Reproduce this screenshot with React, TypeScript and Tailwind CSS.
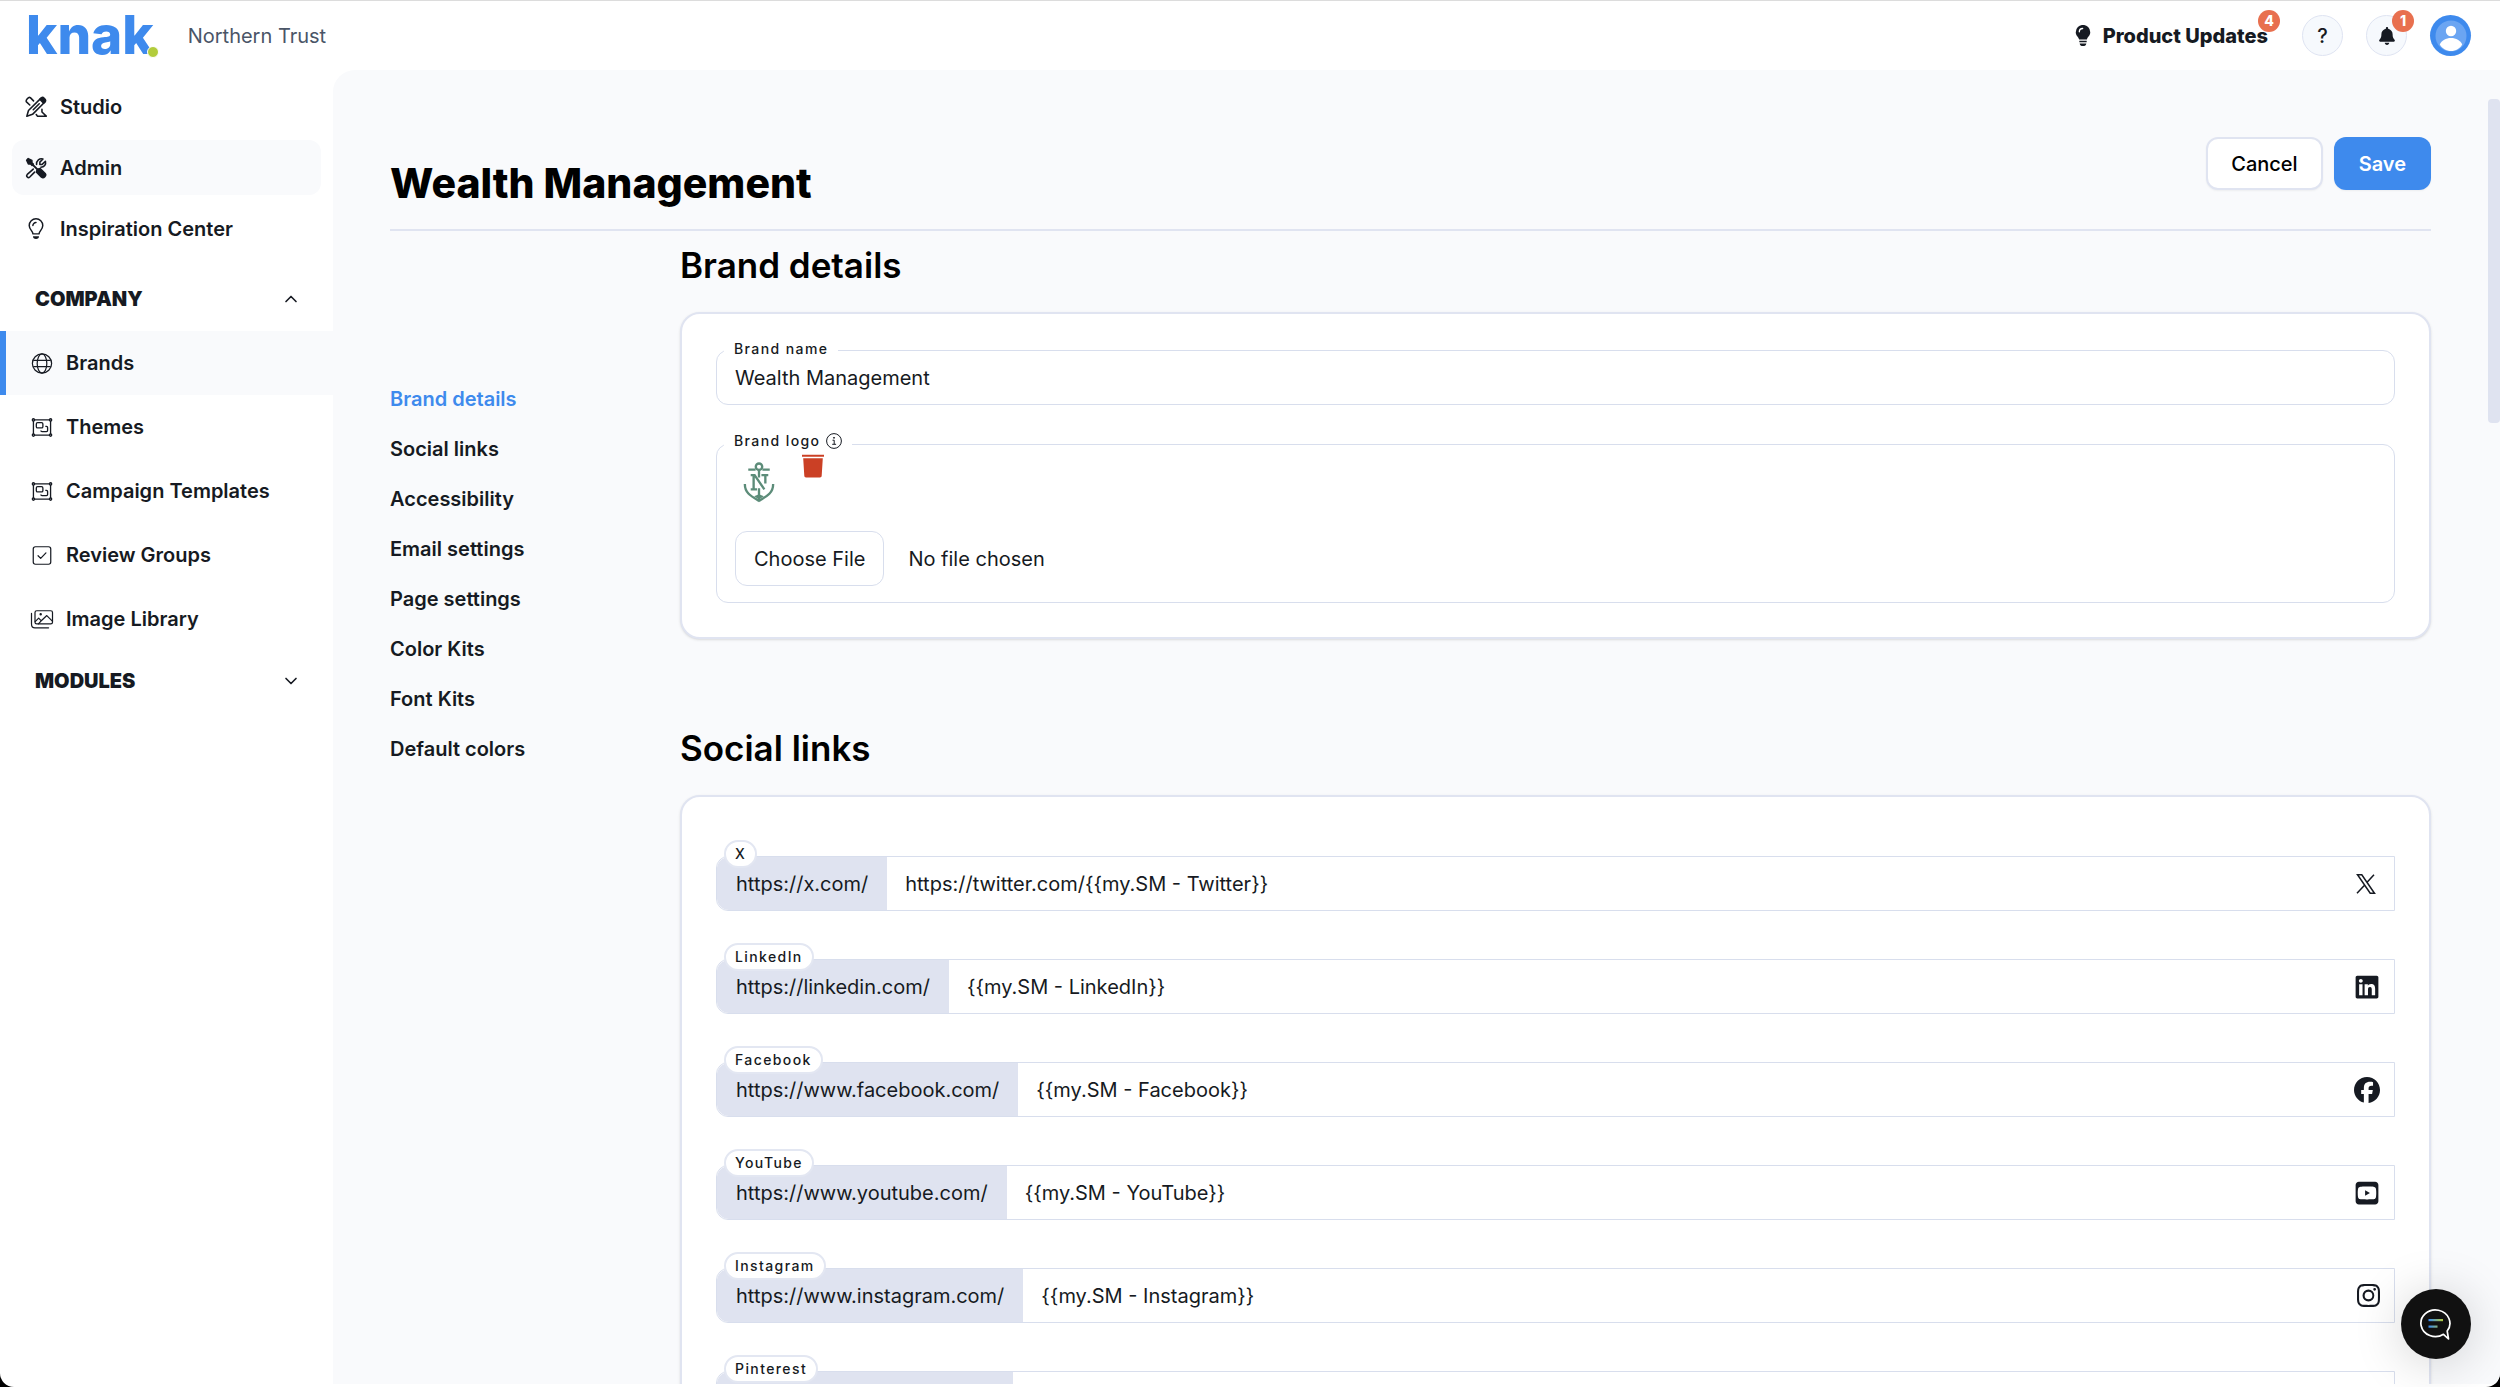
import type { ComponentType, ReactNode } from "react";
import { ChevronDown, ChevronUp } from "lucide-react";
import { BsInstagram } from "react-icons/bs";
import { FaBell, FaFacebook, FaLinkedin, FaSquareYoutube } from "react-icons/fa6";

interface IconProps {
  className?: string;
}

const StudioIcon = ({ className }: IconProps) => (
  <svg viewBox="0 0 24 24" className={className} fill="none" stroke="currentColor" strokeWidth="1.7" strokeLinejoin="round" strokeLinecap="round" aria-hidden="true">
    <path d="M2 22 3.800 15.800 17.200 2.600l4.200 4.200L8.200 20z" />
    <path d="M9 15 15.500 8.500" />
    <path d="M16.200 3.600 18 1.900c1.600-1.400 5.600 2.200 4.100 4.200l-1.800 1.800z" fill="currentColor" />
    <path d="M5.200 9.800 1.600 6.400C.3 4.900 3.900.6 5.800 1.800l3.500 3.500" />
    <path d="M18.500 14.500v3l4.700 4.500H13.500l-1.200-1.800" />
  </svg>
);

const AdminIcon = ({ className }: IconProps) => (
  <svg viewBox="0 0 24 24" className={className} fill="none" stroke="currentColor" strokeWidth="1.7" strokeLinejoin="round" strokeLinecap="round" aria-hidden="true">
    <path d="M1.800 3.500 3.500 1.800 7.500 3.700v2.600l1.500 1.500-1.300 1.300-1.500-1.500H3.700z" fill="currentColor" />
    <path d="m7.500 7.500 6 6" strokeWidth="2.200" />
    <path d="m14.500 13 2-.5 5.500 5.500c1.800 2-1.500 5.800-4 4L12.600 16.500l.4-2z" fill="currentColor" />
    <path d="M9 13.200 2.500 19c-1.800 2 .8 4.600 2.700 2.800L10.500 16.500" />
    <path d="M12.600 8.200c-.4-4.400 3.400-7.300 7-6l-3.400 3.400v2.500h2.500l3.600-3.500c.9 3.600-1.400 6.500-5 6.600" />
  </svg>
);

const BulbOutlineIcon = ({ className }: IconProps) => (
  <svg viewBox="0 0 18 24" className={className} fill="none" stroke="currentColor" strokeWidth="1.600" strokeLinecap="round" aria-hidden="true">
    <path d="M5.700 17.300C5.400 14 1.600 12.600 1.600 8.300a7.400 7.400 0 0 1 14.800 0c0 4.300-3.800 5.700-4.100 9z" strokeLinejoin="round" />
    <path d="M5.600 8.300A3.400 3.400 0 0 1 9 4.900" />
    <path d="M5.700 20h6.600c0 2-1.200 3-3.300 3s-3.300-1-3.300-3z" fill="currentColor" stroke="none" />
  </svg>
);

const BulbIcon = ({ className }: IconProps) => (
  <svg viewBox="0 0 18 24" className={className} fill="currentColor" aria-hidden="true">
    <path d="M4.600 16.500C4 13.700.7 12.300.7 8.200a8.300 8.300 0 0 1 16.600 0c0 4.100-3.300 5.500-3.900 8.300z" />
    <path d="M4.800 18h8.400v1.600H4.800zM5.200 21h7.600c-.3 2-1.500 3-3.800 3s-3.500-1-3.800-3z" />
    <path d="M4.800 7.800A3.800 3.800 0 0 1 8.600 4" fill="none" stroke="white" strokeWidth="1.500" strokeLinecap="round" />
  </svg>
);

const GlobeIcon = ({ className }: IconProps) => (
  <svg viewBox="0 0 24 24" className={className} fill="none" stroke="currentColor" strokeWidth="1.400" aria-hidden="true">
    <circle cx="12" cy="12" r="11" />
    <ellipse cx="12" cy="12" rx="5.500" ry="11" />
    <path d="M2 8.500h20M2 15.500h20" />
  </svg>
);

const TemplateIcon = ({ className }: IconProps) => (
  <svg viewBox="0 0 24 24" className={className} fill="none" stroke="currentColor" strokeWidth="1.500" aria-hidden="true">
    <path d="M3.500 3.300h17M3.500 20.700h17M2.200 4.500v15M21.800 4.500v15" />
    <circle cx="2.200" cy="3.300" r="1.300" />
    <circle cx="21.800" cy="3.300" r="1.300" />
    <circle cx="2.200" cy="20.700" r="1.300" />
    <circle cx="21.800" cy="20.700" r="1.300" />
    <rect x="5.500" y="6.500" width="7.500" height="6" rx="1.500" />
    <path d="M15.800 10.700h1.300c.8 0 1.300.5 1.300 1.300v3.400c0 .8-.5 1.300-1.300 1.300H12c-.8 0-1.300-.5-1.300-1.300" />
  </svg>
);

const ReviewIcon = ({ className }: IconProps) => (
  <svg viewBox="0 0 24 24" className={className} fill="none" stroke="currentColor" strokeWidth="1.400" strokeLinecap="round" strokeLinejoin="round" aria-hidden="true">
    <rect x="2" y="2" width="20" height="20" rx="2.500" />
    <path d="m7.500 12.300 3 3 6-6.300" />
  </svg>
);

const ImagesIcon = ({ className }: IconProps) => (
  <svg viewBox="0 0 26 24" className={className} fill="none" stroke="currentColor" strokeWidth="1.400" strokeLinecap="round" strokeLinejoin="round" aria-hidden="true">
    <rect x="5" y="2" width="20" height="15" rx="2" />
    <path d="M1 5V17c0 2.500 1.500 4.500 4 4.500h15.500" />
    <path d="m5.200 14.500 4-4 3 3L18.500 7.500l6.300 6.300M9 17l4-4.500" />
    <circle cx="11.500" cy="6" r=".7" fill="currentColor" />
  </svg>
);

const InfoIcon = ({ className }: IconProps) => (
  <svg viewBox="0 0 16 16" className={className} fill="none" stroke="currentColor" strokeWidth="1" aria-hidden="true">
    <circle cx="8" cy="8" r="7.400" />
    <path d="M6.500 7.200h1.700v4M6.200 11.300h3.900" />
    <circle cx="8" cy="4.800" r=".5" fill="currentColor" />
  </svg>
);

const TrashIcon = ({ className }: IconProps) => (
  <svg viewBox="0 0 22 24" className={className} fill="currentColor" aria-hidden="true">
    <path d="M0 .8h22v2H0zM1.200 4.300h19.600l-1.100 17.500c-.1 1.200-.7 1.700-1.700 1.700H4c-1 0-1.600-.5-1.700-1.700z" />
  </svg>
);

const XIcon = ({ className }: IconProps) => (
  <svg viewBox="0 0 20 20" className={className} fill="none" stroke="currentColor" strokeWidth="1.500" aria-hidden="true">
    <path d="M1.500.8h4.300l12.700 18.400h-4.300zM1 19.200l7.500-8M18 .8l-6.700 7.300" />
  </svg>
);

const AnchorLogo = ({ className }: IconProps) => (
  <svg viewBox="0 0 32 42" className={className} fill="none" stroke="#5c8c79" strokeWidth="2.400" role="img" aria-label="Brand logo">
    <circle cx="16" cy="4.800" r="3.300" />
    <path d="M5 7.800h7.500M19.500 7.800H27M16 8v8M16 27v13" />
    <path d="M7.500 13.500h4l10 14.500M10.500 14v13.500M7.500 28h6.500M18.500 13.500h7M22.500 14v8" />
    <path d="M1.500 22.500C1.500 32 8 35 16 39.800 24 35 30.500 32 30.500 22.500" />
    <path d="m11 35 5 3.500 5-3.500-5-2z" fill="#5c8c79" stroke="none" />
  </svg>
);

const ChatIcon = ({ className }: IconProps) => (
  <svg viewBox="0 0 32 32" className={className} fill="none" strokeLinecap="round" aria-hidden="true">
    <defs>
      <linearGradient id="chat-lines" x1="9" x2="23" y1="0" y2="0" gradientUnits="userSpaceOnUse">
        <stop offset="0" stopColor="#3b8cf0" />
        <stop offset="1" stopColor="#b5cc3a" />
      </linearGradient>
    </defs>
    <path d="M23.500 26.300A14.500 13.300 0 1 1 27.200 23L28.500 31z" stroke="white" strokeWidth="1.700" strokeLinejoin="round" />
    <rect x="8.500" y="11" width="14.500" height="2.200" fill="url(#chat-lines)" />
    <rect x="8.500" y="17.500" width="9" height="2.200" fill="url(#chat-lines)" />
  </svg>
);

const primaryNav = [
  { label: "Studio", icon: StudioIcon, active: false },
  { label: "Admin", icon: AdminIcon, active: true },
  { label: "Inspiration Center", icon: BulbOutlineIcon, active: false },
];

const companyNav = [
  { label: "Brands", icon: GlobeIcon, active: true },
  { label: "Themes", icon: TemplateIcon, active: false },
  { label: "Campaign Templates", icon: TemplateIcon, active: false },
  { label: "Review Groups", icon: ReviewIcon, active: false },
  { label: "Image Library", icon: ImagesIcon, active: false },
];

const sections = [
  "Brand details",
  "Social links",
  "Accessibility",
  "Email settings",
  "Page settings",
  "Color Kits",
  "Font Kits",
  "Default colors",
];

interface SocialLink {
  name: string;
  prefix: string;
  value: string;
  icon?: ComponentType<IconProps>;
  iconClass?: string;
}

const socialLinks: SocialLink[] = [
  { name: "X", prefix: "https://x.com/", value: "https://twitter.com/{{my.SM - Twitter}}", icon: XIcon, iconClass: "mr-1 size-5" },
  { name: "LinkedIn", prefix: "https://linkedin.com/", value: "{{my.SM - LinkedIn}}", icon: FaLinkedin, iconClass: "size-[26px]" },
  { name: "Facebook", prefix: "https://www.facebook.com/", value: "{{my.SM - Facebook}}", icon: FaFacebook, iconClass: "size-[26px]" },
  { name: "YouTube", prefix: "https://www.youtube.com/", value: "{{my.SM - YouTube}}", icon: FaSquareYoutube, iconClass: "size-[26px]" },
  { name: "Instagram", prefix: "https://www.instagram.com/", value: "{{my.SM - Instagram}}", icon: BsInstagram, iconClass: "size-[23px]" },
  { name: "Pinterest", prefix: "https://www.pinterest.com/", value: "" },
];

const Badge = ({ children, className }: { children: ReactNode; className: string }) => (
  <span className={`absolute flex size-[22px] items-center justify-center rounded-full bg-[#e8704f] text-sm font-extrabold text-white ${className}`}>
    {children}
  </span>
);

const Header = () => (
  <header className="flex h-[70px] shrink-0 items-center border-t border-[#dcdcdc] pr-[29px] pl-[26px]">
    <a href="#" aria-label="knak home" className="relative flex h-[52px] items-center text-[53px] leading-none font-extrabold text-[#3e8aed]">
      <span>knak</span>
      <span className="absolute right-[-5px] bottom-1 size-3 rounded-full border border-white bg-[#b2cc3b]" />
    </a>
    <span className="ml-[34px] text-xl text-[#4a5567]">Northern Trust</span>

    <div className="ml-auto flex items-center">
      <button type="button" className="relative mr-[34px] flex h-9 items-center gap-3 text-xl font-extrabold">
        <BulbIcon className="h-[21px] w-4" />
        Product Updates
        <Badge className="-top-2 -right-3">4</Badge>
      </button>
      <button type="button" aria-label="Help" className="mr-[23px] flex size-[41px] items-center justify-center rounded-full border border-[#dfe4f2] bg-[#f6f9fd] text-xl font-medium">
        ?
      </button>
      <button type="button" aria-label="Notifications" className="relative mr-[23px] flex size-[41px] items-center justify-center rounded-full border border-[#dfe4f2] bg-[#f6f9fd]">
        <FaBell className="h-[18px] w-4" />
        <Badge className="-top-1.5 -right-2">1</Badge>
      </button>
      <button type="button" aria-label="Account" className="flex size-[41px] items-center justify-center rounded-full bg-[#3e8aed]">
        <svg viewBox="0 0 32 32" className="size-8" aria-hidden="true">
          <circle cx="16" cy="16" r="15.500" fill="#6ba5f2" />
          <circle cx="16" cy="11" r="5.200" fill="white" />
          <path d="M4.800 24.500C6.500 20.500 11 18 16 18s9.500 2.500 11.200 6.500C25 28.500 20.800 31 16 31S7 28.500 4.800 24.500z" fill="white" />
        </svg>
      </button>
    </div>
  </header>
);

const Sidebar = () => (
  <nav aria-label="Main" className="w-[333px] shrink-0 pt-[9px] text-xl font-semibold">
    <ul className="space-y-1.5 px-3">
      {primaryNav.map(({ label, icon: Icon, active }) => (
        <li key={label}>
          <a href="#" className={active ? "flex h-[55px] items-center rounded-xl bg-[#f9fafc] pl-3" : "flex h-[55px] items-center rounded-xl pl-3"}>
            <Icon className="h-[22px] w-6" />
            <span className="ml-3">{label}</span>
          </a>
        </li>
      ))}
    </ul>

    <button type="button" aria-expanded="true" className="mt-[11px] flex h-16 w-full items-center justify-between pr-8 pl-[35px] font-black">
      COMPANY
      <ChevronUp className="size-5" />
    </button>
    <ul>
      {companyNav.map(({ label, icon: Icon, active }) => (
        <li key={label}>
          <a
            href="#"
            className={active ? "flex h-16 items-center border-l-6 border-[#3e8aed] bg-[#f9fafc] pl-6" : "flex h-16 items-center border-l-6 border-transparent pl-6"}
          >
            <Icon className="h-[21px] w-6" />
            <span className="ml-3">{label}</span>
          </a>
        </li>
      ))}
    </ul>
    <button type="button" aria-expanded="false" className="flex h-15 w-full items-center justify-between pr-8 pl-[35px] font-black">
      MODULES
      <ChevronDown className="size-5" />
    </button>
  </nav>
);

const Card = ({ children, className }: { children: ReactNode; className: string }) => (
  <div className={`rounded-[20px] border-2 border-[#e0e4f1] bg-white px-[34px] shadow-sm ${className}`}>{children}</div>
);

const BrandDetails = () => (
  <section id="brand-details">
    <h2 className="text-[35px] leading-10 font-semibold text-black">Brand details</h2>
    <Card className="mt-[27px] pt-[25px] pb-[34px]">
      <div className="relative pt-[11px]">
        <label htmlFor="brand-name" className="absolute top-0 left-2 bg-white px-2.5 text-sm leading-5 font-medium tracking-widest">
          Brand name
        </label>
        <input
          id="brand-name"
          type="text"
          defaultValue="Wealth Management"
          className="h-[55px] w-full rounded-xl border border-[#d8deed] px-[18px] text-xl"
        />
      </div>

      <div className="relative mt-[26px] pt-[13px]">
        <div className="absolute top-0 left-2 flex items-center gap-1.5 bg-white px-2.5 text-sm leading-5 font-medium tracking-widest">
          <label htmlFor="brand-logo">Brand logo</label>
          <InfoIcon className="size-4" />
        </div>
        <div className="rounded-xl border border-[#d8deed] px-[18px] pt-[7px] pb-4">
          <div className="flex items-start gap-[27px]">
            <AnchorLogo className="mt-2.5 ml-2 h-[41px] w-8" />
            <button type="button" aria-label="Remove logo" className="mt-0.5 text-[#cb4025]">
              <TrashIcon className="h-6 w-[22px]" />
            </button>
          </div>
          <input
            id="brand-logo"
            type="file"
            className="mt-7 block w-full text-xl file:mr-6 file:h-[55px] file:rounded-xl file:border file:border-solid file:border-[#d8deed] file:bg-white file:px-[18px] file:text-xl"
          />
        </div>
      </div>
    </Card>
  </section>
);

const SocialLinks = () => (
  <section id="social-links" className="mt-[89px]">
    <h2 className="text-[35px] leading-10 font-semibold text-black">Social links</h2>
    <Card className="mt-[27px] pt-[43px] pb-9">
      <div className="space-y-8">
        {socialLinks.map(({ name, prefix, value, icon: Icon, iconClass }) => (
          <div key={name} className="relative pt-4">
            <label
              htmlFor={name}
              className="absolute top-0 left-2 rounded-full border-2 border-[#e3e7f2] bg-white px-[9px] text-sm leading-6 font-medium tracking-widest"
            >
              {name}
            </label>
            <div className="flex h-[55px] rounded-l-xl border border-[#d8deed] text-xl">
              <span className="flex items-center rounded-l-xl bg-[#dfe3f0] px-[19px] leading-5">{prefix}</span>
              <input id={name} type="text" defaultValue={value} className="min-w-0 flex-1 px-[18px]" />
              <span className="flex items-center pr-3.5">{Icon && <Icon className={iconClass} />}</span>
            </div>
          </div>
        ))}
      </div>
    </Card>
  </section>
);

export default function App() {
  return (
    <div className="h-screen bg-black font-['Inter',sans-serif] text-[#161a22]">
      <div className="relative flex h-full flex-col overflow-hidden rounded-b-[14px] bg-white pb-[3px]">
        <Header />
        <div className="flex min-h-0 flex-1">
          <Sidebar />
          <main className="relative min-w-0 flex-1 overflow-hidden rounded-tl-[22px] bg-[#f9fafc] pr-[69px] pl-[57px]">
            <div className="flex h-[161px] justify-between border-b-2 border-[#e0e4f1] pt-[67px]">
              <h1 className="pt-[18px] text-[41px] leading-14 font-extrabold text-black">Wealth Management</h1>
              <div className="flex h-[53px] gap-[11px] text-xl">
                <button type="button" className="rounded-xl border-2 border-[#e0e4f1] bg-white px-[23px] font-medium text-black shadow-xs">
                  Cancel
                </button>
                <button type="button" className="rounded-xl bg-[#3e8aed] px-[25px] font-semibold text-white shadow-xs">
                  Save
                </button>
              </div>
            </div>

            <div className="flex">
              <nav aria-label="Sections" className="w-[290px] shrink-0 pt-[153px]">
                <ul className="space-y-5 text-xl leading-[30px] font-semibold">
                  {sections.map((section, i) => (
                    <li key={section}>
                      <a href="#" className={i === 0 ? "text-[#3e8aed]" : undefined}>
                        {section}
                      </a>
                    </li>
                  ))}
                </ul>
              </nav>
              <div className="min-w-0 flex-1 pt-3.5">
                <BrandDetails />
                <SocialLinks />
              </div>
            </div>

            {/* Scrollbar thumb */}
            <div className="absolute top-[29px] right-0 h-[324px] w-3 rounded bg-[#dfe3f0]" />
          </main>
        </div>

        <button
          type="button"
          aria-label="Open chat"
          className="absolute right-[29px] bottom-7 flex size-[70px] items-center justify-center rounded-full bg-[#111111] shadow-[0_4px_50px_rgba(0,0,0,0.18)]"
        >
          <ChatIcon className="size-8" />
        </button>
      </div>
    </div>
  );
}
